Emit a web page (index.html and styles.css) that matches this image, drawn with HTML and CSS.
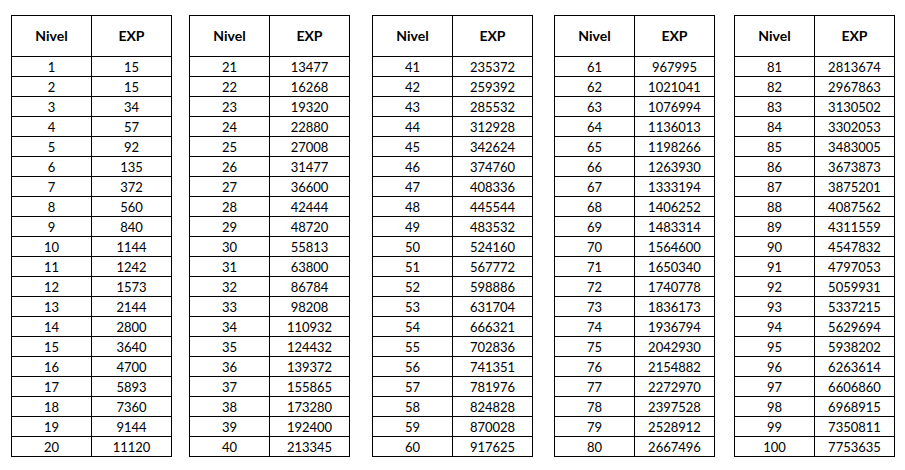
FILE: index.html
```html
<!DOCTYPE html>
<html lang="es">
<head>
<meta charset="utf-8">
<title>Nivel EXP</title>
<link rel="stylesheet" href="styles.css">
</head>
<body>
<div class="sheet">
  <div class="tbl">
    <div class="hd">Nivel</div><div class="hd">EXP</div>
    <div class="c">1</div><div class="c">15</div>
    <div class="c">2</div><div class="c">15</div>
    <div class="c">3</div><div class="c">34</div>
    <div class="c">4</div><div class="c">57</div>
    <div class="c">5</div><div class="c">92</div>
    <div class="c">6</div><div class="c">135</div>
    <div class="c">7</div><div class="c">372</div>
    <div class="c">8</div><div class="c">560</div>
    <div class="c">9</div><div class="c">840</div>
    <div class="c">10</div><div class="c">1144</div>
    <div class="c">11</div><div class="c">1242</div>
    <div class="c">12</div><div class="c">1573</div>
    <div class="c">13</div><div class="c">2144</div>
    <div class="c">14</div><div class="c">2800</div>
    <div class="c">15</div><div class="c">3640</div>
    <div class="c">16</div><div class="c">4700</div>
    <div class="c">17</div><div class="c">5893</div>
    <div class="c">18</div><div class="c">7360</div>
    <div class="c">19</div><div class="c">9144</div>
    <div class="c">20</div><div class="c">11120</div>
  </div>
  <div class="tbl t2">
    <div class="hd">Nivel</div><div class="hd">EXP</div>
    <div class="c">21</div><div class="c">13477</div>
    <div class="c">22</div><div class="c">16268</div>
    <div class="c">23</div><div class="c">19320</div>
    <div class="c">24</div><div class="c">22880</div>
    <div class="c">25</div><div class="c">27008</div>
    <div class="c">26</div><div class="c">31477</div>
    <div class="c">27</div><div class="c">36600</div>
    <div class="c">28</div><div class="c">42444</div>
    <div class="c">29</div><div class="c">48720</div>
    <div class="c">30</div><div class="c">55813</div>
    <div class="c">31</div><div class="c">63800</div>
    <div class="c">32</div><div class="c">86784</div>
    <div class="c">33</div><div class="c">98208</div>
    <div class="c">34</div><div class="c">110932</div>
    <div class="c">35</div><div class="c">124432</div>
    <div class="c">36</div><div class="c">139372</div>
    <div class="c">37</div><div class="c">155865</div>
    <div class="c">38</div><div class="c">173280</div>
    <div class="c">39</div><div class="c">192400</div>
    <div class="c">40</div><div class="c">213345</div>
  </div>
  <div class="tbl t3">
    <div class="hd">Nivel</div><div class="hd">EXP</div>
    <div class="c">41</div><div class="c">235372</div>
    <div class="c">42</div><div class="c">259392</div>
    <div class="c">43</div><div class="c">285532</div>
    <div class="c">44</div><div class="c">312928</div>
    <div class="c">45</div><div class="c">342624</div>
    <div class="c">46</div><div class="c">374760</div>
    <div class="c">47</div><div class="c">408336</div>
    <div class="c">48</div><div class="c">445544</div>
    <div class="c">49</div><div class="c">483532</div>
    <div class="c">50</div><div class="c">524160</div>
    <div class="c">51</div><div class="c">567772</div>
    <div class="c">52</div><div class="c">598886</div>
    <div class="c">53</div><div class="c">631704</div>
    <div class="c">54</div><div class="c">666321</div>
    <div class="c">55</div><div class="c">702836</div>
    <div class="c">56</div><div class="c">741351</div>
    <div class="c">57</div><div class="c">781976</div>
    <div class="c">58</div><div class="c">824828</div>
    <div class="c">59</div><div class="c">870028</div>
    <div class="c">60</div><div class="c">917625</div>
  </div>
  <div class="tbl t4">
    <div class="hd">Nivel</div><div class="hd">EXP</div>
    <div class="c">61</div><div class="c">967995</div>
    <div class="c">62</div><div class="c">1021041</div>
    <div class="c">63</div><div class="c">1076994</div>
    <div class="c">64</div><div class="c">1136013</div>
    <div class="c">65</div><div class="c">1198266</div>
    <div class="c">66</div><div class="c">1263930</div>
    <div class="c">67</div><div class="c">1333194</div>
    <div class="c">68</div><div class="c">1406252</div>
    <div class="c">69</div><div class="c">1483314</div>
    <div class="c">70</div><div class="c">1564600</div>
    <div class="c">71</div><div class="c">1650340</div>
    <div class="c">72</div><div class="c">1740778</div>
    <div class="c">73</div><div class="c">1836173</div>
    <div class="c">74</div><div class="c">1936794</div>
    <div class="c">75</div><div class="c">2042930</div>
    <div class="c">76</div><div class="c">2154882</div>
    <div class="c">77</div><div class="c">2272970</div>
    <div class="c">78</div><div class="c">2397528</div>
    <div class="c">79</div><div class="c">2528912</div>
    <div class="c">80</div><div class="c">2667496</div>
  </div>
  <div class="tbl t5">
    <div class="hd">Nivel</div><div class="hd">EXP</div>
    <div class="c">81</div><div class="c">2813674</div>
    <div class="c">82</div><div class="c">2967863</div>
    <div class="c">83</div><div class="c">3130502</div>
    <div class="c">84</div><div class="c">3302053</div>
    <div class="c">85</div><div class="c">3483005</div>
    <div class="c">86</div><div class="c">3673873</div>
    <div class="c">87</div><div class="c">3875201</div>
    <div class="c">88</div><div class="c">4087562</div>
    <div class="c">89</div><div class="c">4311559</div>
    <div class="c">90</div><div class="c">4547832</div>
    <div class="c">91</div><div class="c">4797053</div>
    <div class="c">92</div><div class="c">5059931</div>
    <div class="c">93</div><div class="c">5337215</div>
    <div class="c">94</div><div class="c">5629694</div>
    <div class="c">95</div><div class="c">5938202</div>
    <div class="c">96</div><div class="c">6263614</div>
    <div class="c">97</div><div class="c">6606860</div>
    <div class="c">98</div><div class="c">6968915</div>
    <div class="c">99</div><div class="c">7350811</div>
    <div class="c">100</div><div class="c">7753635</div>
  </div>
</div>
</body>
</html>
```
FILE: styles.css
```css
html, body {
  margin: 0;
  padding: 0;
  background: #ffffff;
}

body {
  font-family: Lato, "Liberation Sans", sans-serif;
  color: #000000;
}

.sheet {
  display: flex;
  align-items: flex-start;
  padding: 15px 0 0 11px;
}

.tbl {
  display: grid;
  grid-template-columns: 80px 80px;
  grid-template-rows: 41px;
  grid-auto-rows: 20px;
  border-top: 1px solid #000;
  border-left: 1px solid #000;
}

.t2 { margin-left: 17px; }
.t3 { margin-left: 22px; }
.t4 { margin-left: 21px; }
.t5 { margin-left: 19px; }

.hd,
.c {
  box-sizing: border-box;
  border-right: 1px solid #000;
  border-bottom: 1px solid #000;
  display: flex;
  align-items: center;
  justify-content: center;
  font-size: 13px;
  line-height: 1;
}

.hd {
  font-weight: 700;
  font-size: 14px;
}

.c {
  padding-top: 1px;
}
```
